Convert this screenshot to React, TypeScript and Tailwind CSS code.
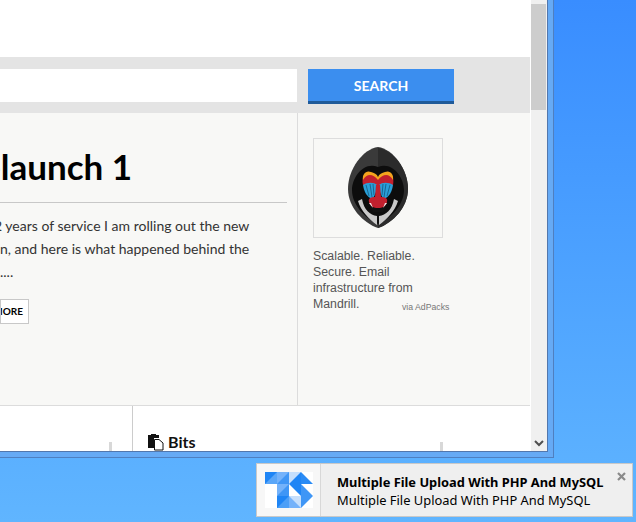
import React from "react";

const Mandrill = () => (
  <svg width="62" height="82" viewBox="0 0 62 82">
    <path d="M31 0C46 2 61 22 61 42C61 60 46 76 31 81C16 76 1 60 1 42C1 22 16 2 31 0Z" fill="#3a3a3a" />
    <path d="M31 1C46 3 61 22 61 42C61 60 46 76 31 81Z" fill="#2b2b2b" />
    <path d="M31 20C45 14 57 30 57 43C57 58 44 71 31 77C18 71 5 58 5 43C5 30 17 14 31 20Z" fill="#0d0d0d" />
    <path d="M11 54C14 64 22 72 30 78L30 69C23 68 17 63 15 52ZM51 54C48 64 40 72 32 78L32 69C39 68 45 63 47 52Z" fill="#c9c9c9" />
    <path d="M16 38C14 29 19 24 24 26C27 27 30 29 31 32C32 29 35 27 38 26C43 24 48 29 46 38Z" fill="#c2202e" />
    <path d="M16 33C15 27 19 23 24 25C27 26 30 27 31 30C32 27 35 26 38 25C43 23 47 27 46 33C42 26 36 27 31 33C26 27 20 26 16 33Z" fill="#f4a41e" />
    <path d="M16 38C20 35 27 35 30 38C30 44 28 49 25 52C20 50 17 45 16 38Z" fill="#2a9fd8" />
    <path d="M46 38C42 35 35 35 32 38C32 44 34 49 37 52C42 50 45 45 46 38Z" fill="#2a9fd8" />
    <path d="M19 38L22 49M23 37L25 50M26 37L27 48M43 38L40 49M39 37L37 50M36 37L35 48" stroke="#15587e" strokeWidth="0.8" />
    <path d="M29 38L33 38L34 50C38 50 41 51 40 55C39 59 36 61 31 61C26 61 23 59 22 55C21 51 24 50 28 50Z" fill="#c2202e" />
    <path d="M22 59C27 62 35 62 40 59L36 65L26 65Z" fill="#111" />
    <path d="M22 56L26 61L24 56ZM40 56L36 61L38 56Z" fill="#eee" />
  </svg>
);

const Logo = () => (
  <svg width="48" height="36" viewBox="0 0 48 36" className="bg-white">
    <path d="M0 0H12V12H0Z" fill="#5aa6f8" />
    <path d="M0 0H12L0 12Z" fill="#1f85f5" />
    <path d="M12 0H24V12H12Z" fill="#74b2fa" />
    <path d="M24 0V12H12Z" fill="#3f96f6" />
    <path d="M24 0H36V12H24Z" fill="#c6dffc" />
    <path d="M36 0V12H24Z" fill="#1f85f5" />
    <path d="M36 0L48 12H36Z" fill="#2a8bf5" />
    <path d="M12 12H24V24H12Z" fill="#74b2fa" />
    <path d="M24 12V24L12 24Z" fill="#3f96f6" />
    <path d="M24 12H36V24Z" fill="#1f85f5" />
    <path d="M36 12L48 24H36Z" fill="#3f96f6" />
    <path d="M12 24H24V36H12Z" fill="#1f85f5" />
    <path d="M24 24V36L12 36Z" fill="#4c9ff7" />
    <path d="M24 24H36V36H24Z" fill="#c6dffc" />
    <path d="M24 24L36 36H24Z" fill="#74b2fa" />
    <path d="M36 24H48L36 36Z" fill="#3f96f6" />
  </svg>
);

const FileIcon = () => (
  <svg width="16" height="17" viewBox="0 0 16 17" className="mr-1 mt-px">
    <path d="M0 1H11V4H6V14H0Z" fill="#111" />
    <path d="M3 0H8V2H3Z" fill="#111" />
    <path d="M6.5 5.5H11L15 9V16H6.5Z" fill="#fff" stroke="#111" />
  </svg>
);

export default function App() {
  return (
    <div className="relative w-[636px] h-[522px] overflow-hidden bg-gradient-to-b from-[#398dff] to-[#60b5ff]">
      <div className="w-[554px] h-[458px] bg-[#66aaf5] border-r border-b border-[#4f7fc0] pr-[5px] pb-[5px]">
        <div className="flex h-full border-r border-b border-[#5277ad]">
          <div className="w-[531px] h-full bg-white overflow-hidden flex flex-col">
            <div className="h-[57px] shrink-0" />
            <div className="h-[56px] shrink-0 bg-[#e4e4e4] w-[530px] flex pt-3">
              <div className="w-[297px] h-[33px] bg-white" />
              <button className="ml-[11px] w-[146px] h-[35px] bg-[#3b8eef] border-b-[3px] border-[#1f5a99] text-white text-[14px] font-['Lato',sans-serif] font-bold">
                SEARCH
              </button>
            </div>
            <div className="h-[293px] shrink-0 w-[530px] flex bg-[#f8f8f6] border-b border-[#dcdcdc]">
              <div className="w-[298px] shrink-0 border-r border-[#dcdcdc] overflow-hidden font-['Lato',sans-serif]">
                <h1 className="ml-[-18px] mt-[30px] h-[46px] text-[35px] leading-[46px] font-bold text-black whitespace-nowrap">
                  elaunch 1
                </h1>
                <div className="w-[287px] mt-[13px] border-t border-[#c8c8c8]" />
                <p className="mt-[11px] text-[14px] leading-[23px] text-[#333] whitespace-nowrap">
                  <span className="block ml-[-6px]">2 years of service I am rolling out the new</span>
                  <span className="block">n, and here is what happened behind the</span>
                  <span className="block">....</span>
                </p>
                <div className="mt-[16px] w-[29px] h-[25px] bg-white border border-[#c8c8c8] flex items-center justify-end pr-[5px] overflow-hidden">
                  <span className="text-[10px] font-bold text-black">MORE</span>
                </div>
              </div>
              <div className="flex-1 pl-[15px] pt-[25px] font-['Liberation_Sans',sans-serif]">
                <div className="w-[130px] h-[100px] border border-[#dddddd] flex items-center justify-center">
                  <Mandrill />
                </div>
                <div className="relative mt-[10px] w-[110px] text-[12.3px] leading-[16px] text-[#555]">
                  Scalable. Reliable. Secure. Email infrastructure from Mandrill.
                  <span className="absolute left-[89px] bottom-[-3px] text-[8.7px] text-[#777] whitespace-nowrap">
                    via AdPacks
                  </span>
                </div>
              </div>
            </div>
            <div className="flex-1 w-[530px] flex font-['Lato',sans-serif]">
              <div className="w-[133px] border-r border-[#cccccc] flex justify-end items-end pr-[20px]">
                <div className="w-[3px] h-[10px] bg-[#d8d8d8]" />
              </div>
              <div className="flex-1 relative pl-[15px] pt-[27px] flex items-start">
                <FileIcon />
                <span className="text-[16px] leading-[20px] font-bold text-[#111] mt-[-1px]">Bits</span>
                <div className="absolute left-[307px] bottom-0 w-[3px] h-[10px] bg-[#d8d8d8]" />
              </div>
            </div>
          </div>
          <div className="flex-1 bg-[#f0f0f0] relative">
            <div className="mt-[4px] w-[15px] h-[106px] bg-[#cdcdcd]" />
            <svg width="10" height="7" viewBox="0 0 10 7" className="absolute left-[3px] bottom-[4px]">
              <path d="M1 1L5 5L9 1" fill="none" stroke="#505050" strokeWidth="2" />
            </svg>
          </div>
        </div>
      </div>
      <div className="absolute left-[256px] top-[463px] w-[377px] h-[54px] flex bg-[#efefef] border border-[#c9c9c9] font-['Noto_Sans',sans-serif]">
        <div className="w-[64px] shrink-0 bg-[#f7f7f7] border-r border-[#d8d8d8] pl-[8px] pt-[8px]">
          <Logo />
        </div>
        <div className="pl-[16px] pt-[9px] text-black whitespace-nowrap">
          <div className="text-[12.85px] leading-[18px] font-bold">Multiple File Upload With PHP And MySQL</div>
          <div className="text-[12.9px] leading-[18px]">Multiple File Upload With PHP And MySQL</div>
        </div>
        <svg width="9" height="9" viewBox="0 0 9 9" className="absolute right-[6px] top-[8px]">
          <path d="M1 1L8 8M8 1L1 8" stroke="#8a8a8a" strokeWidth="2.2" />
        </svg>
      </div>
    </div>
  );
}
